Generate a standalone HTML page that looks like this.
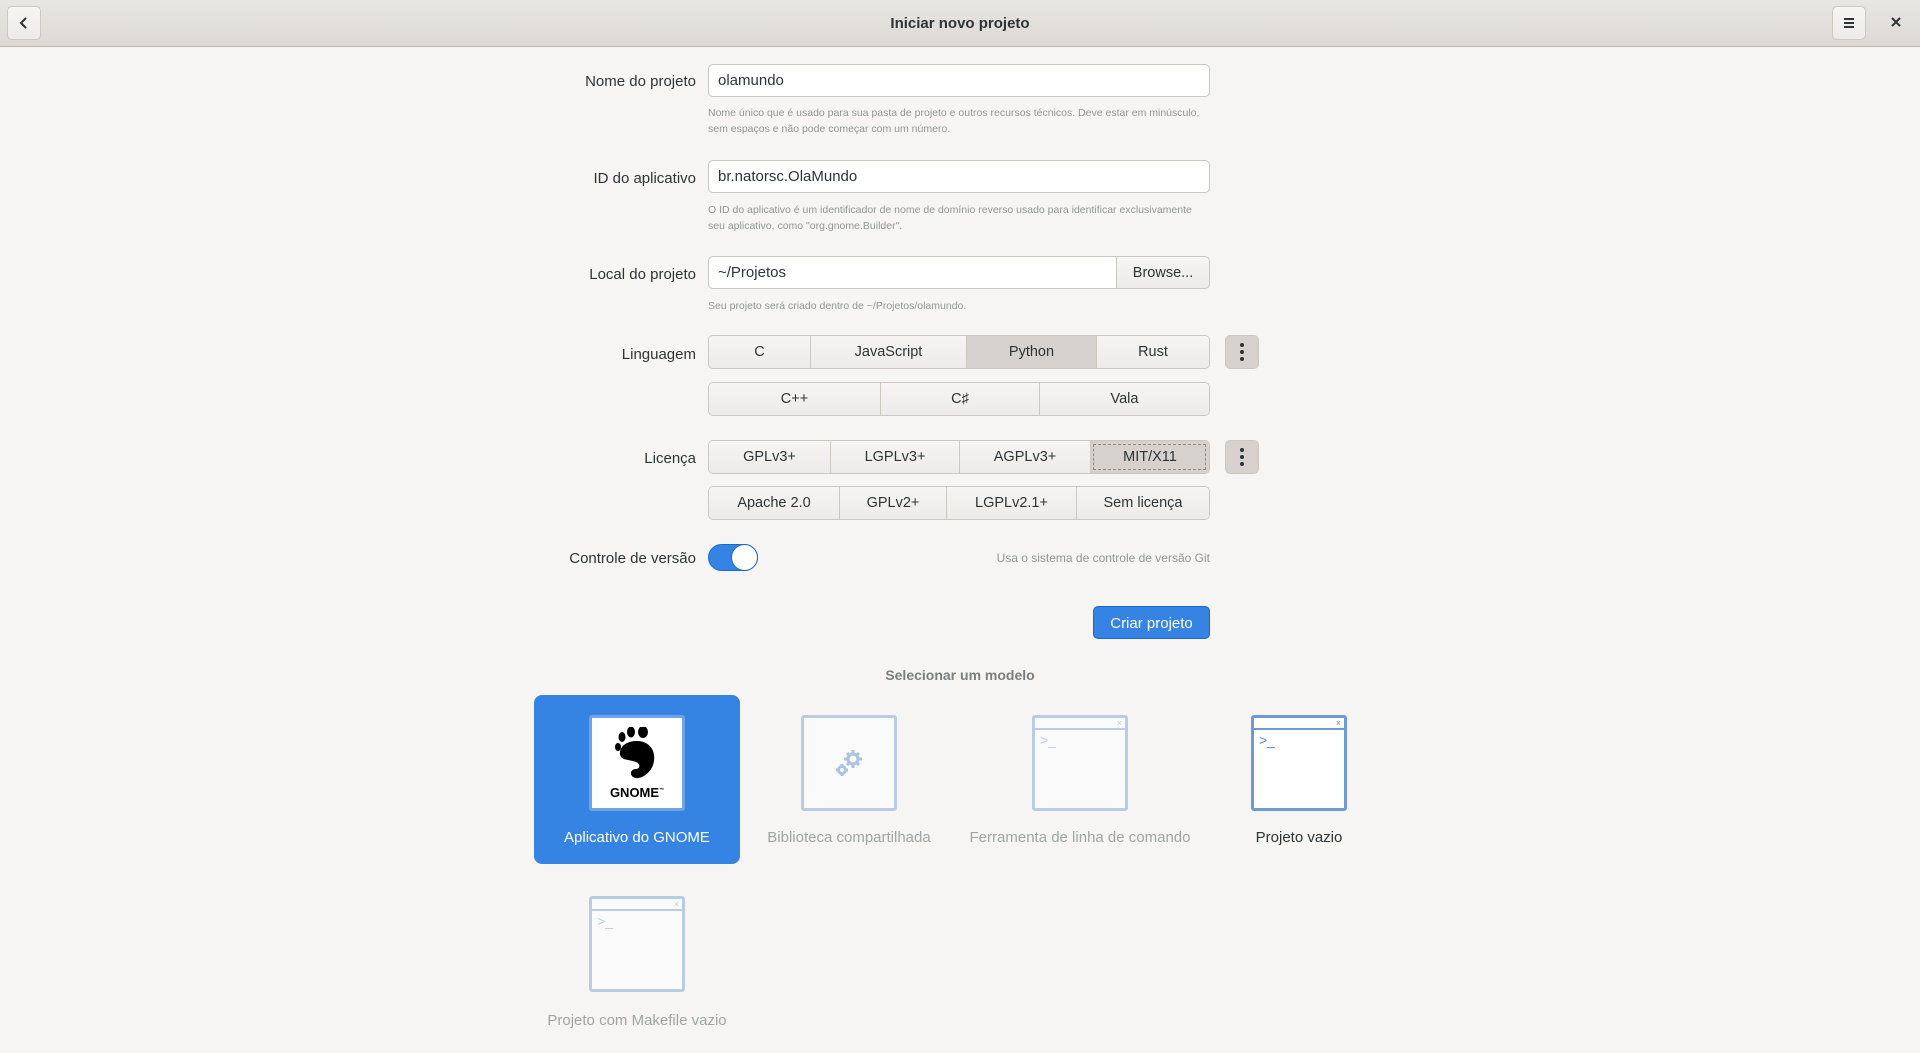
<!DOCTYPE html>
<html><head><meta charset="utf-8"><style>
*{box-sizing:border-box;margin:0;padding:0}
body{width:1920px;height:1053px;background:#f6f5f4;font-family:"Liberation Sans","DejaVu Sans",sans-serif;color:#2e3436;position:relative;overflow:hidden;font-size:15px}
.a{position:absolute}
.hdr{left:0;top:0;width:1920px;height:47px;background:linear-gradient(#e8e6e3,#dcd9d5);border-bottom:1px solid #bfb8b1}
.hb{background:linear-gradient(#f6f5f4,#edebe9);border:1px solid #cdc7c2;border-radius:5px;display:flex;align-items:center;justify-content:center}
.lbl{right:1224px;text-align:right;white-space:nowrap}
.ent{left:708px;width:502px;height:33px;background:#fff;border:1px solid #cdc7c2;border-radius:5px;padding:0 9px;line-height:31px}
.help{left:708px;font-size:10.5px;color:#929595;line-height:16px;width:500px}
.grp{display:flex;height:34px;border:1px solid #cdc7c2;border-radius:5px;overflow:hidden;left:708px;width:502px;font-size:14.5px}
.grp div{border-left:1px solid #cdc7c2;background:linear-gradient(#f6f5f4,#edebe9);display:flex;align-items:center;justify-content:center;color:#2e3436}
.grp div:first-child{border-left:none}
.grp .on{background:#d6d1cd}
.keb{width:34px;height:34px;left:1225px;background:#d6d1cd;border-radius:5px;border:1px solid #cdc7c2;display:flex;flex-direction:column;align-items:center;justify-content:center;gap:3px}
.keb i{width:4px;height:4px;border-radius:2px;background:#2e3436;display:block}
.ic{width:96px;height:96px;border:3px solid #b8cde4;border-radius:3px;background:#fafafa}
.tl{font-size:15px;color:#a0a4a4;text-align:center;width:260px}
</style></head><body>
<div class="a hdr"></div>
<div class="a hb" style="left:7px;top:6px;width:34px;height:34px"><svg width="14" height="14"><path d="M9 2 L4 7 L9 12" stroke="#2e3436" stroke-width="2" fill="none"/></svg></div>
<div class="a" style="left:0;width:1920px;top:15px;text-align:center;font-weight:bold;font-size:15px">Iniciar novo projeto</div>
<div class="a hb" style="left:1832px;top:6px;width:34px;height:34px"><svg width="14" height="14"><path d="M2 3h10M2 7h10M2 11h10" stroke="#2e3436" stroke-width="2"/></svg></div>
<div class="a" style="left:1889px;top:15px"><svg width="14" height="14"><path d="M3 3L11 11M11 3L3 11" stroke="#2e3436" stroke-width="2"/></svg></div>

<div class="a lbl" style="top:73px">Nome do projeto</div>
<div class="a ent" style="top:64px">olamundo</div>
<div class="a help" style="top:105px">Nome único que é usado para sua pasta de projeto e outros recursos técnicos. Deve estar em minúsculo, sem espaços e não pode começar com um número.</div>

<div class="a lbl" style="top:170px">ID do aplicativo</div>
<div class="a ent" style="top:160px">br.natorsc.OlaMundo</div>
<div class="a help" style="top:202px">O ID do aplicativo é um identificador de nome de domínio reverso usado para identificar exclusivamente seu aplicativo, como "org.gnome.Builder".</div>

<div class="a lbl" style="top:266px">Local do projeto</div>
<div class="a ent" style="top:256px;width:412px;border-radius:5px 0 0 5px">~/Projetos</div>
<div class="a hb" style="left:1116px;top:256px;width:94px;height:33px;border-radius:0 5px 5px 0;font-size:14.5px">Browse...</div>
<div class="a help" style="top:298px">Seu projeto será criado dentro de ~/Projetos/olamundo.</div>

<div class="a lbl" style="top:346px">Linguagem</div>
<div class="a grp" style="top:335px"><div style="width:101px">C</div><div style="width:156px">JavaScript</div><div class="on" style="width:130px">Python</div><div style="flex:1">Rust</div></div>
<div class="a keb" style="top:335px"><i></i><i></i><i></i></div>
<div class="a grp" style="top:382px"><div style="width:171px">C++</div><div style="width:159px">C♯</div><div style="flex:1">Vala</div></div>

<div class="a lbl" style="top:450px">Licença</div>
<div class="a grp" style="top:440px"><div style="width:121px">GPLv3+</div><div style="width:129px">LGPLv3+</div><div style="width:131px">AGPLv3+</div><div class="on" style="flex:1;outline:1px dashed #8f8a85;outline-offset:-4px">MIT/X11</div></div>
<div class="a keb" style="top:440px"><i></i><i></i><i></i></div>
<div class="a grp" style="top:486px"><div style="width:130px">Apache 2.0</div><div style="width:107px">GPLv2+</div><div style="width:130px">LGPLv2.1+</div><div style="flex:1">Sem licença</div></div>

<div class="a lbl" style="top:550px">Controle de versão</div>
<div class="a" style="left:708px;top:544px;width:50px;height:27px;border-radius:14px;background:#3584e4;border:1px solid #1b6acb"></div>
<div class="a" style="left:731px;top:544px;width:27px;height:27px;border-radius:14px;background:#fff;border:1px solid #1b6acb"></div>
<div class="a" style="right:710px;top:551px;font-size:12px;color:#929595">Usa o sistema de controle de versão Git</div>

<div class="a" style="left:1093px;top:606px;width:117px;height:33px;border-radius:5px;background:#3584e4;border:1px solid #1b6acb;color:#fff;display:flex;align-items:center;justify-content:center;padding-top:2px">Criar projeto</div>

<div class="a" style="left:0;width:1920px;top:667px;text-align:center;font-weight:bold;color:#7b7e7e;font-size:14px">Selecionar um modelo</div>

<div class="a" style="left:534px;top:695px;width:206px;height:169px;background:#3584e4;border-radius:8px"></div>
<div class="a ic" style="left:589px;top:715px;background:#fff;border-color:#6ea3e6;display:flex;flex-direction:column;align-items:center;justify-content:center">
<svg width="50" height="56" viewBox="0 0 50 56"><ellipse cx="10" cy="10" rx="3.5" ry="5" /><ellipse cx="19" cy="5" rx="4" ry="5.5"/><ellipse cx="31" cy="5" rx="5" ry="6"/><ellipse cx="6" cy="20" rx="3" ry="4"/><path d="M25 14c14 0 20 12 16 24-3 9-14 16-20 12-4-3-2-8 3-8 4 0 5-5 0-7-8-3-17-1-16-10 1-7 8-11 17-11z"/></svg>
<div style="font-weight:bold;font-size:13px;color:#000;margin-top:2px">GNOME<sup style="font-size:5px">™</sup></div></div>
<div class="a tl" style="left:507px;top:829px;color:#fff">Aplicativo do GNOME</div>

<div class="a ic" style="left:801px;top:715px;display:flex;align-items:center;justify-content:center">
<svg width="36" height="36" viewBox="0 0 36 36" fill="none" stroke="#a9c3e0" stroke-width="3"><circle cx="22" cy="14" r="5"/><circle cx="11" cy="25" r="3.5"/><path d="M22 5v3M22 20v3M13 14h3M28 14h3M16 8l2 2M26 18l2 2M16 20l2-2M26 10l2-2M11 19v2M11 29v2M5 25h2M15 25h2" /></svg></div>
<div class="a tl" style="left:719px;top:829px">Biblioteca compartilhada</div>

<div class="a ic" style="left:1032px;top:715px"><div style="height:12px;border-bottom:2px solid #b8cde4;font-size:9px;color:#b8cde4;text-align:right;padding-right:3px;line-height:11px">×</div><div style="color:#b8cde4;font-size:14px;padding:2px 5px">&gt;_</div></div>
<div class="a tl" style="left:950px;top:829px">Ferramenta de linha de comando</div>

<div class="a ic" style="left:1251px;top:715px;border-color:#6f9bd1;background:#fff"><div style="height:12px;border-bottom:2px solid #6f9bd1;font-size:9px;color:#6f9bd1;text-align:right;padding-right:3px;line-height:11px">×</div><div style="color:#5b8ccc;font-size:14px;padding:2px 5px">&gt;_</div></div>
<div class="a tl" style="left:1169px;top:829px;color:#2e3436">Projeto vazio</div>

<div class="a ic" style="left:589px;top:896px"><div style="height:12px;border-bottom:2px solid #b8cde4;font-size:9px;color:#b8cde4;text-align:right;padding-right:3px;line-height:11px">×</div><div style="color:#b8cde4;font-size:14px;padding:2px 5px">&gt;_</div></div>
<div class="a tl" style="left:507px;top:1012px">Projeto com Makefile vazio</div>
</body></html>
